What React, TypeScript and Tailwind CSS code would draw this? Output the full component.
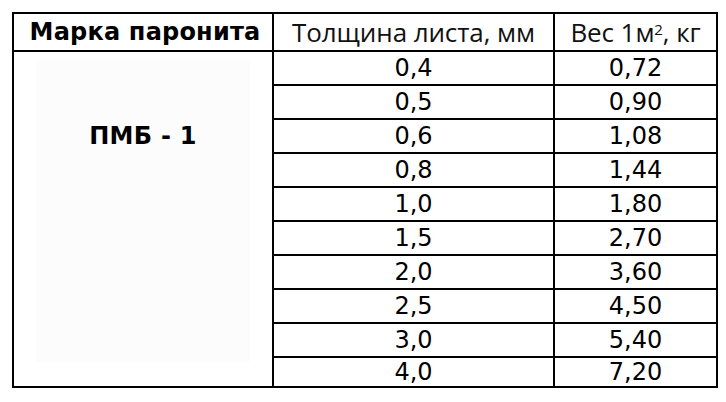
import React from "react";

const rows: [string, string][] = [
  ["0,4", "0,72"],
  ["0,5", "0,90"],
  ["0,6", "1,08"],
  ["0,8", "1,44"],
  ["1,0", "1,80"],
  ["1,5", "2,70"],
  ["2,0", "3,60"],
  ["2,5", "4,50"],
  ["3,0", "5,40"],
  ["4,0", "7,20"],
];

export default function App() {
  return (
    <div className="w-[726px] h-[402px] bg-white pl-[12px] pt-[12px] overflow-hidden">
      <div className="w-[706px] h-[376px] border-2 border-black flex flex-col text-black">
        <div className="flex h-[38px] border-b-2 border-black shrink-0">
          <div className="w-[260px] border-r-2 border-black flex items-center justify-center font-['DejaVu_Sans',sans-serif] font-bold text-[24px] leading-none pl-[4px] tracking-[0.2px]">
            Марка паронита
          </div>
          <div className="w-[281px] border-r-2 border-black flex items-center justify-center font-['Open_Sans',sans-serif] text-[26px] leading-none tracking-[-0.1px] text-[#111] pb-[1px]">
            Толщина листа, мм
          </div>
          <div className="flex-1 flex items-center justify-center font-['Open_Sans',sans-serif] text-[26px] leading-none tracking-[-0.1px] text-[#111] pb-[1px]">
            Вес 1м<sup className="text-[15px] relative -top-[3px]">2</sup>, кг
          </div>
        </div>
        <div className="flex flex-1">
          <div className="w-[260px] border-r-2 border-black px-[22px] pt-[8px] pb-[24px]">
            <div className="h-full bg-[#fcfcfc] flex justify-center pt-[64px] font-['DejaVu_Sans',sans-serif] font-bold text-[24px] leading-none tracking-[0.3px]">
              ПМБ - 1
            </div>
          </div>
          <div className="flex-1 flex flex-col">
            {rows.map(([a, b], i) => (
              <div
                key={i}
                className={
                  i < rows.length - 1
                    ? "flex h-[34px] border-b-2 border-black shrink-0"
                    : "flex flex-1"
                }
              >
                <div className="w-[281px] border-r-2 border-black flex items-center justify-center font-['DejaVu_Sans',sans-serif] text-[24px] leading-none">
                  {a}
                </div>
                <div className="flex-1 flex items-center justify-center font-['DejaVu_Sans',sans-serif] text-[24px] leading-none">
                  {b}
                </div>
              </div>
            ))}
          </div>
        </div>
      </div>
    </div>
  );
}
